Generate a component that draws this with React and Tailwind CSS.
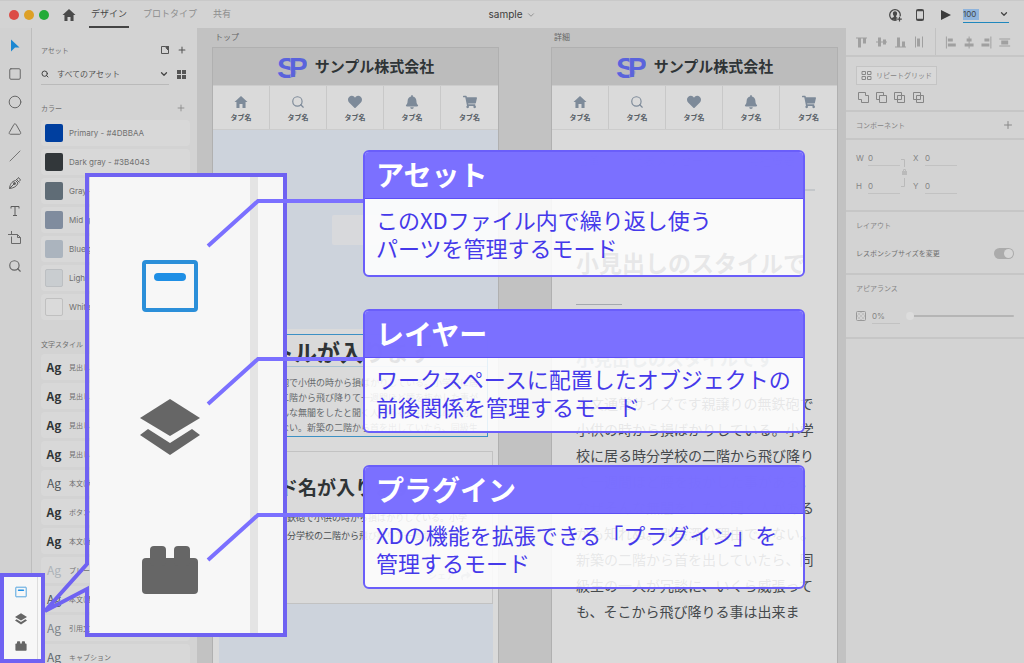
import React, { useState } from "react";
import { IoMdHome } from "react-icons/io";
import { FaHeart, FaBell, FaShare, FaShoppingCart } from "react-icons/fa";
import { LuSearch } from "react-icons/lu";
import {
  ChevronDown,
  Circle,
  Plus,
  Search,
  Slash,
  Square,
  Triangle,
} from "lucide-react";

const colors = [
  { name: "Primary - #4DBBAA", swatch: "bg-[#003f9f]" },
  { name: "Dark gray - #3B4043", swatch: "bg-[#32373a]" },
  { name: "Gray - #6B7A85", swatch: "bg-[#5f6c76]" },
  { name: "Mid gray - #8E9BAE", swatch: "bg-[#808c9e]" },
  { name: "Blue gray - #C3CDD8", swatch: "bg-[#abb4be]" },
  { name: "Light gray - #E9EEF2", swatch: "bg-[#c9cdd0] border border-[#bcbfc2]" },
  { name: "White - #FFFFFF", swatch: "bg-[#dadada] border border-[#c0c0c0]" },
];

const textStyles = [
  { name: "見出し1", style: "font-bold text-[#2f3436]" },
  { name: "見出し2", style: "font-bold text-[#2f3436]" },
  { name: "見出し3", style: "font-bold text-[#2f3436]" },
  { name: "見出し4", style: "font-bold text-[#2f3436]" },
  { name: "本文(大)", style: "text-[#505558]" },
  { name: "ボタン", style: "font-bold text-[#2f3436]" },
  { name: "本文(太字)", style: "font-bold text-[#2f3436]" },
  { name: "プレースホルダー", style: "text-[#adb3b8]" },
  { name: "本文(標準)", style: "text-[#505558]" },
  { name: "引用文", style: "text-[#7f868c]" },
  { name: "キャプション", style: "text-[#62696e]" },
];

const tabs = [
  { icon: IoMdHome, size: "size-4" },
  { icon: LuSearch, size: "size-3.5" },
  { icon: FaHeart, size: "size-3.5" },
  { icon: FaBell, size: "size-3.5" },
  { icon: FaShoppingCart, size: "size-3.5" },
];

const topLines = [
  "親譲りの無鉄砲で小供の時から損ばかりしている。小学校に居",
  "る時分学校の二階から飛び降りて一週間ほど腰を抜かした事が",
  "ある。なぜそんな無闇をしたと聞く人があるかも知れぬ。別段",
  "深い理由でもない。新築の二階から首を出していたら、同級生",
];

const cardLines = [
  "親譲りの無鉄砲で小供の時から損ばかりしている。小学",
  "校に居る時分学校の二階から飛び降りて一週間ほど腰を",
];

const detailLines = [
  "本文通常サイズです親譲りの無鉄砲で",
  "小供の時から損ばかりしている。小学",
  "校に居る時分学校の二階から飛び降り",
  "て一週間ほど腰を抜かした事がある。",
  "なぜそんな無闇をしたと聞く人がある",
  "かも知れぬ。別段深い理由でもない。",
  "新築の二階から首を出していたら、同",
  "級生の一人が冗談に、いくら威張って",
  "も、そこから飛び降りる事は出来ま",
];

const callouts = [
  {
    title: "アセット",
    lines: ["このXDファイル内で繰り返し使う", "パーツを管理するモード"],
    place: "top-[150px] h-[127px]",
  },
  {
    title: "レイヤー",
    lines: ["ワークスペースに配置したオブジェクトの", "前後関係を管理するモード"],
    place: "top-[309px] h-[124px]",
  },
  {
    title: "プラグイン",
    lines: ["XDの機能を拡張できる「プラグイン」を", "管理するモード"],
    place: "top-[465px] h-[124px]",
  },
];

/* ---------- Icons ---------- */

function AssetIcon({ className }) {
  return (
    <svg viewBox="0 0 60 60" className={className} fill="none" stroke="#2b8fd9">
      <rect x="4" y="6" width="52" height="48" rx="2" strokeWidth="4" />
      <path d="M18 21h24" strokeWidth="8" strokeLinecap="round" stroke="#1f8fe5" />
    </svg>
  );
}

function LayerIcon({ className }) {
  return (
    <svg viewBox="0 0 60 60" className={className} fill="#666">
      <path d="M30 1 60 20 30 38 0 20Z" />
      <path d="M8 31 30 45 52 31 60 37 30 57 0 37Z" />
    </svg>
  );
}

function PluginIcon({ className }) {
  return (
    <svg viewBox="0 0 60 60" className={className} fill="#666">
      <rect x="2" y="18" width="56" height="36" rx="4" />
      <rect x="10" y="6" width="16" height="20" rx="4" />
      <rect x="34" y="6" width="16" height="20" rx="4" />
    </svg>
  );
}

function PenIcon() {
  return (
    <svg viewBox="0 0 14 14" className="size-3.5" fill="none" stroke="#5c5c5c">
      <path d="M1.500 12.500C2 8.500 3.500 5.500 7.500 4.500L10 7C9 10.500 5.500 12 1.500 12.500ZM1.500 12.500 6 8M8 3 11.500 6.500M9 3.500 10.500 1.500 12.500 4 11 5.500" />
      <circle cx="6.500" cy="7.500" r="1" fill="#5c5c5c" />
    </svg>
  );
}

function TextIcon() {
  return (
    <svg viewBox="0 0 14 14" className="size-3.5" fill="none" stroke="#5c5c5c">
      <path d="M3 4.500V2.500H11V4.500M7 2.500V11.500M5 11.500H9" />
    </svg>
  );
}

function ArtboardIcon() {
  return (
    <svg viewBox="0 0 14 14" className="size-3.5" fill="none" stroke="#6a6a6a">
      <path d="M3.500 0V3.500M0 3.500H9.500L12.500 6.500V12.500H3.500V5.500M9.500 3.500V6.500H12.500" />
    </svg>
  );
}

const tools = [
  {
    name: "選択",
    icon: (
      <svg viewBox="0 0 14 14" className="size-3.5" fill="#1b87d2">
        <path d="M3 .5 11.500 8.500H7L3 12.500Z" />
      </svg>
    ),
  },
  { name: "長方形", icon: <Square className="size-3.5" strokeWidth={1.7} /> },
  { name: "楕円形", icon: <Circle className="size-3.5" strokeWidth={1.7} /> },
  { name: "多角形", icon: <Triangle className="size-3.5" strokeWidth={1.7} /> },
  { name: "線", icon: <Slash className="size-3" strokeWidth={1.7} /> },
  { name: "ペン", icon: <PenIcon /> },
  { name: "テキスト", icon: <TextIcon /> },
  { name: "アートボード", icon: <ArtboardIcon /> },
  { name: "ズーム", icon: <Search className="size-3.5" strokeWidth={2} /> },
];

/* ---------- Header ---------- */

function Header() {
  const [zoom, setZoom] = useState("100");

  return (
    <header className="flex h-7 shrink-0 items-center bg-[#d3d3d3] border-t border-[#c9c9c9]">
      <div className="flex flex-1 items-center h-full">
        <div className="flex gap-[5px] ml-[9px]">
          <span className="size-2.5 rounded-full bg-[#dc4c46]" />
          <span className="size-2.5 rounded-full bg-[#dda026]" />
          <span className="size-2.5 rounded-full bg-[#23ab38]" />
        </div>
        <button aria-label="ホーム" className="ml-3">
          <IoMdHome className="size-4 text-[#4a4a4a]" />
        </button>
        <nav className="ml-3 flex h-full gap-3 text-[9px] text-[#8d8d8d]">
          <a href="#design" className="flex items-center border-b-2 border-[#444] px-0.5 text-[#444]">
            デザイン
          </a>
          <a href="#prototype" className="flex items-center px-0.5 border-b-2 border-transparent">
            プロトタイプ
          </a>
          <a href="#share" className="flex items-center px-0.5 border-b-2 border-transparent">
            共有
          </a>
        </nav>
      </div>
      <button className="flex items-center gap-[3px] font-['Inter',sans-serif] text-[10px] text-[#3c3c3c]">
        sample
        <ChevronDown className="size-2.5 text-[#888]" />
      </button>
      <div className="flex flex-1 items-center justify-end">
        <button aria-label="共有ユーザー">
          <svg viewBox="0 0 14 14" className="size-3.5" fill="none" stroke="#484848">
            <circle cx="7" cy="7" r="5.300" strokeWidth="1.300" />
            <path
              d="M7 3.200C5.500 3.200 4.800 4.300 4.900 5.700C5 6.900 5.500 7.400 5.900 8L5.800 9L3.300 10.300C5 12.400 8.500 12.500 10 11L10.500 10.200L8.200 9L8.100 8C8.600 7.400 9 6.900 9.100 5.700C9.200 4.300 8.500 3.200 7 3.200Z"
              fill="#484848"
              stroke="none"
            />
            <path d="M11.500 8.500V14M8.700 11.200H14" stroke="#d3d3d3" strokeWidth="3" />
            <path d="M11.500 9V13.500M9.200 11.200H13.800" strokeWidth="1.200" />
          </svg>
        </button>
        <button aria-label="デバイスプレビュー" className="ml-3">
          <svg viewBox="0 0 12 14" className="h-3.5 w-3" fill="none" stroke="#484848">
            <rect x="2.500" y="1.500" width="7" height="11" rx="1" />
            <path d="M2.500 2.500H9.500M2.500 11.500H9.500" strokeWidth="1.500" />
          </svg>
        </button>
        <button aria-label="再生" className="ml-[15px]">
          <svg viewBox="0 0 10 10" className="size-2.5" fill="#3c3c3c">
            <path d="M0 0 10 5 0 10Z" />
          </svg>
        </button>
        <div className="ml-3 mr-[15px] flex h-4 w-[46px] items-center border-b border-[#1f87bd]">
          <input
            aria-label="ズーム率"
            value={zoom}
            onChange={(e) => setZoom(e.target.value)}
            className="h-[11px] w-4 bg-[#8fb4dc] font-['Inter',sans-serif] text-[8px] text-[#444] outline-none"
          />
          <ChevronDown className="ml-auto size-2.5 text-[#444]" strokeWidth={3} />
        </div>
      </div>
    </header>
  );
}

/* ---------- Left side ---------- */

function Toolbar() {
  return (
    <aside className="w-8 shrink-0 border-r border-[#bdbdbd] bg-[#d1d1d1] pt-[11px] pr-px">
      <div className="flex h-[234px] flex-col items-center justify-between text-[#666]">
        {tools.map((tool) => (
          <button key={tool.name} aria-label={tool.name}>
            {tool.icon}
          </button>
        ))}
      </div>
    </aside>
  );
}

function AssetPanel() {
  return (
    <aside className="w-[165px] shrink-0 overflow-hidden bg-[#d3d3d3] pl-[9px] pr-[7px] text-[7px] leading-none text-[#707070]">
      <div className="mt-[15px] flex h-3.5 items-center">
        <h2>アセット</h2>
        <svg viewBox="0 0 10 10" className="ml-auto size-2.5" fill="none" stroke="#555">
          <path d="M5 1.500H1.500V8.500H8.500V5M5.500 1.500H8.500V5" />
          <path d="M5.500 1.500H8.500V5.500L7 4Z" fill="#555" />
        </svg>
        <button aria-label="追加" className="ml-[7px] mr-[3px]">
          <Plus className="size-2.5 text-[#555]" strokeWidth={2.5} />
        </button>
      </div>
      <div className="mt-1.5 flex items-center">
        <div className="flex h-[22px] w-32 items-center border-b border-[#bababa] text-[8px]">
          <Search className="size-2 text-[#444]" strokeWidth={3} />
          <span className="ml-2 text-[#555]">すべてのアセット</span>
          <ChevronDown className="ml-auto size-2.5 text-[#444]" strokeWidth={3} />
        </div>
        <button aria-label="グリッド表示" className="ml-2">
          <svg viewBox="0 0 9 9" className="size-[9px]" fill="#555">
            <path d="M0 0H4V4H0ZM5 0H9V4H5ZM0 5H4V9H0ZM5 5H9V9H5Z" />
          </svg>
        </button>
      </div>
      <div className="mt-4 flex h-3.5 items-center justify-between">
        <h3>カラー</h3>
        <button aria-label="カラーを追加" className="mr-1">
          <Plus className="size-2.5 text-[#888]" />
        </button>
      </div>
      <ul className="mt-[5px] flex flex-col gap-[3px] font-['Inter',sans-serif] text-[8px]">
        {colors.map((c) => (
          <li key={c.name} className="flex h-[26px] items-center rounded-sm bg-[#d8d8d8] px-1">
            <span className={`size-[18px] rounded-xs ${c.swatch}`} />
            <span className="ml-1.5 whitespace-nowrap">{c.name}</span>
          </li>
        ))}
      </ul>
      <h3 className="mt-[21px] h-[13px]">文字スタイル</h3>
      <ul className="flex flex-col gap-[3px]">
        {textStyles.map((t) => (
          <li key={t.name} className="flex h-[26px] shrink-0 items-center rounded-sm bg-[#d8d8d8] px-1">
            <span className={`w-[18px] text-center text-xs ${t.style}`}>Ag</span>
            <span className="ml-1.5 whitespace-nowrap">{t.name}</span>
          </li>
        ))}
      </ul>
    </aside>
  );
}

/* ---------- Artboards ---------- */

function Logo() {
  return (
    <svg viewBox="0 0 30 26" className="h-[26px] w-[30px]" fill="#5a63dc">
      <g fontFamily="Liberation Sans" fontWeight="bold">
        <text x="0" y="24" fontSize="30">S</text>
        <text x="12" y="23" fontSize="28" stroke="#bcbcbc" strokeWidth="1" paintOrder="stroke">P</text>
      </g>
    </svg>
  );
}

function Artboard({ label, children }) {
  return (
    <section className="flex w-[287px] shrink-0 flex-col">
      <h2 className="mt-[3px] mb-[5px] h-[11px] pl-[3px] text-[8px] leading-[11px] text-[#666]">{label}</h2>
      <div className="flex flex-1 flex-col overflow-hidden border-x border-t border-[#b0b0b0] bg-[#dadada]">
        <div className="flex h-[37px] shrink-0 items-center justify-center gap-2 bg-[#bcbcbc]">
          <Logo />
          <span className="text-[15px] font-bold text-[#2f3436]">サンプル株式会社</span>
        </div>
        <nav className="grid h-[45px] shrink-0 grid-cols-5 divide-x divide-[#c8c8c8] border-y border-[#cccccc]">
          {tabs.map(({ icon: Icon, size }, i) => (
            <a key={i} href="#tab" className="flex flex-col items-center pt-2 text-[#7d8a99]">
              <span className="flex h-4 items-center">
                <Icon className={size} />
              </span>
              <span className="mt-0.5 text-[7px] leading-[10px] font-bold text-[#596168]">タブ名</span>
            </a>
          ))}
        </nav>
        {children}
      </div>
    </section>
  );
}

function TopArtboard() {
  return (
    <Artboard label="トップ">
      <div className="flex h-[199px] shrink-0 justify-center bg-[#cdd3dc] pt-[85px]">
        <span className="h-[30px] w-12 rounded-xs bg-[#d8d9dc]" />
      </div>
      <div className="flex flex-1 flex-col pt-[5px] pr-[5px] pl-[6px]">
        <div className="mr-[5px] h-[103px] shrink-0 border border-[#3c90c4] text-[#65696c]">
          <h3 className="h-8 border-b border-[#a9c3d3] pl-[5px] text-[23px] leading-8 font-bold whitespace-nowrap text-[#2f3436]">
            タイトルが入ります
          </h3>
          <div className="mt-2 pl-1.5 text-[9px] leading-[15px] whitespace-nowrap">
            {topLines.map((line) => (
              <p key={line}>{line}</p>
            ))}
          </div>
        </div>
        <article className="mt-3.5 flex h-[153px] shrink-0 flex-col border border-[#c2c2c2] px-[21px] pt-[21px] whitespace-nowrap">
          <h3 className="text-[19px] leading-7 font-bold text-[#2f3436]">カード名が入ります</h3>
          <div className="mt-2 pl-px text-[9px] leading-[18px] text-[#4a4f52]">
            {cardLines.map((line) => (
              <p key={line}>{line}</p>
            ))}
          </div>
          <a href="#share" className="mt-6 flex items-center justify-end gap-1.5 text-[9px] font-bold text-[#9aa3ad]">
            シェア
            <FaShare className="size-2.5" />
          </a>
        </article>
        <div className="flex-1 bg-[#cdd3dc]" />
      </div>
    </Artboard>
  );
}

function DetailArtboard() {
  return (
    <Artboard label="詳細">
      <div className="pl-6 text-[#45494c]">
        <nav className="mr-[22px] flex justify-between pt-[23px] text-xs whitespace-nowrap text-[#6f7a86]">
          <a href="#history" className="h-[38px] border-b-2 border-[#b5bac0]">沿革</a>
          <a href="#message" className="h-[38px]">代表メッセージ</a>
          <a href="#company" className="h-[38px] border-b-2 border-[#c4c7ca] pr-5">会社概要</a>
        </nav>
        <h3 className="mt-[55px] text-[23px] leading-8 font-bold whitespace-nowrap">小見出しのスタイルで</h3>
        <hr className="mt-[26px] w-[46px] border-[#a4a9ae]" />
        <h4 className="mt-[39px] text-lg leading-7 font-bold whitespace-nowrap text-[#7f8890]">
          小見出しのスタイルです
        </h4>
        <div className="mt-[18px] text-sm leading-[26px] whitespace-nowrap">
          {detailLines.map((line) => (
            <p key={line}>{line}</p>
          ))}
        </div>
      </div>
    </Artboard>
  );
}

/* ---------- Right side ---------- */

function Field({ label }) {
  return (
    <label className="flex items-center font-['Inter',sans-serif] text-[8px] text-[#858585]">
      <span className="w-3">{label}</span>
      <input defaultValue="0" className="h-4 w-8 border-b border-[#c2c2c2] outline-none" />
    </label>
  );
}

function AlignIcons() {
  return (
    <div className="flex h-[29px] items-start border-b-2 border-[#c6c6c6]">
      <svg viewBox="0 0 89 26" className="h-[27px] w-[89px]" fill="#a0a0a0">
        <path d="M10 9h11v1H10ZM12 10h3v9h-3ZM17 10h3v5h-3Z" />
        <path d="M30 13h11v1H30ZM32 9h3v9h-3ZM37 11h3v5h-3Z" />
        <path d="M49 18h11v1H49ZM51 9h3v9h-3ZM56 13h3v5h-3Z" />
        <path d="M69 8h1v11h-1ZM76 8h1v11h-1ZM71 10h3v8h-3Z" />
      </svg>
      <svg viewBox="0 0 88 26" className="h-[27px] w-[88px] border-l border-[#c2c2c2]" fill="#a0a0a0">
        <path d="M10 8h1v12h-1ZM12 10h5v3h-5ZM12 15h8v3h-8Z" />
        <path d="M33 8h1v12h-1ZM31 10h5v3h-5ZM29 15h9v3h-9Z" />
        <path d="M55 8h1v12h-1ZM49 10h5v3h-5ZM46 15h8v3h-8Z" />
        <path d="M64 10h11v1H64ZM64 17h11v1H64ZM66 12h7v4h-7Z" />
      </svg>
    </div>
  );
}

function PropertyPanel() {
  return (
    <aside className="w-[178px] shrink-0 bg-[#d3d3d3] text-[7px] leading-none text-[#858585]">
      <AlignIcons />
      <section className="h-[55px] border-b-2 border-[#c6c6c6] px-2.5 pt-[9px]">
        <button className="flex h-[19px] w-[81px] items-center gap-1 border border-[#c4c4c4] bg-[#d8d8d8] px-1 whitespace-nowrap">
          <svg viewBox="0 0 11 11" className="size-[11px]" fill="none" stroke="#888">
            <path d="M1 1.500H4.500V4.500H1ZM6.500 1.500H10V4.500H6.500ZM1 6.500H4.500V9.500H1ZM6.500 6.500H10V9.500H6.500Z" />
          </svg>
          リピートグリッド
        </button>
        <svg viewBox="0 0 70 12" className="mt-[7px] ml-0.5 h-3 w-[70px]" fill="none" stroke="#858585">
          <path d="M.5 .5H7.500V3.500H10.500V10.500H3.500V7.500H.5Z" />
          <path d="M25.500 3.500V.5H18.500V7.500H21.500M21.500 3.500H28.500V10.500H21.500Z" />
          <path d="M36.500 .5H43.500V7.500H36.500ZM39.500 3.500H46.500V10.500H39.500Z" />
          <path d="M55.500 .5H62.500V7.500H55.500ZM58.500 3.500H65.500V10.500H58.500Z" />
        </svg>
      </section>
      <section className="flex h-7 items-center justify-between border-b-2 border-[#c6c6c6] px-2.5">
        <h3>コンポーネント</h3>
        <button aria-label="コンポーネントを追加">
          <Plus className="size-3 text-[#888]" />
        </button>
      </section>
      <section className="flex h-[72px] border-b-2 border-[#c6c6c6] px-2.5 pt-2.5">
        <div className="flex flex-col gap-3">
          <Field label="W" />
          <Field label="H" />
        </div>
        <svg viewBox="0 0 13 44" className="h-11 w-[13px]" fill="none" stroke="#bababa">
          <path d="M1 9.500H4.500V17M4.500 28V36.500H1" />
          <rect x="2.500" y="21.500" width="4" height="3" fill="#bababa" />
          <path d="M3.500 21V19.500H5.500V21" />
        </svg>
        <div className="flex flex-col gap-3">
          <Field label="X" />
          <Field label="Y" />
        </div>
      </section>
      <section className="h-[63px] border-b-2 border-[#c6c6c6] px-2.5 pt-2.5">
        <h3>レイアウト</h3>
        <label className="mt-[19px] flex items-center justify-between text-[#707070]">
          レスポンシブサイズを変更
          <input
            type="checkbox"
            defaultChecked
            className="relative h-[11px] w-5 appearance-none rounded-full bg-[#ababab] before:absolute before:top-px before:right-px before:size-[9px] before:rounded-full before:bg-[#d6d6d6]"
          />
        </label>
      </section>
      <section className="h-[64px] border-b-2 border-[#c6c6c6] px-2.5 pt-2.5">
        <h3>アピアランス</h3>
        <div className="mt-4 flex items-center">
          <svg viewBox="0 0 10 10" className="size-2.5" fill="none" stroke="#999">
            <path d="M2 2 8 8M8 2 2 8M5 1 1 5M9 5 5 9M5 1 9 5M1 5 5 9" stroke="#c2c2c2" />
            <rect x=".5" y=".5" width="9" height="9" rx="1" />
          </svg>
          <input
            aria-label="不透明度"
            defaultValue="0%"
            className="ml-1.5 h-4 w-7 border-b border-[#c2c2c2] font-['Inter',sans-serif] text-[8px] outline-none"
          />
          <input
            type="range"
            aria-label="不透明度スライダー"
            defaultValue="0"
            className="ml-1.5 h-2 w-[108px] appearance-none [&::-webkit-slider-runnable-track]:h-0.5 [&::-webkit-slider-runnable-track]:rounded-full [&::-webkit-slider-runnable-track]:bg-[#b5b5b5] [&::-webkit-slider-thumb]:-mt-[3px] [&::-webkit-slider-thumb]:size-2 [&::-webkit-slider-thumb]:appearance-none [&::-webkit-slider-thumb]:rounded-full [&::-webkit-slider-thumb]:bg-[#dcdcdc]"
          />
        </div>
      </section>
    </aside>
  );
}

/* ---------- Annotations on top of the app ---------- */

function ModeBox() {
  return (
    <div className="absolute top-[573px] left-0 flex h-[90px] w-[45px] border-4 border-[#6f62f2] bg-[#f7f7f7]">
      <div className="flex w-[34px] flex-col items-center gap-[15px] border-r border-[#dddddd] pt-[9px]">
        <AssetIcon className="size-3" />
        <LayerIcon className="size-3" />
        <PluginIcon className="size-3" />
      </div>
    </div>
  );
}

function ModeZoom() {
  return (
    <div className="absolute top-[175px] left-[90px] flex h-[460px] w-[195px] bg-[#f7f7f7]">
      <div className="flex w-[168px] flex-col items-center gap-[82px] border-r-8 border-[#e4e4e4] pt-[81px]">
        <AssetIcon className="size-[60px]" />
        <LayerIcon className="size-[60px]" />
        <PluginIcon className="size-[60px]" />
      </div>
    </div>
  );
}

function Leaders() {
  return (
    <svg
      viewBox="0 0 400 663"
      className="pointer-events-none absolute top-0 left-0 h-[663px] w-[400px]"
      fill="none"
      strokeWidth="4"
    >
      <path d="M87 564V175H285V635H87V589L45 611Z" stroke="#6f62f2" />
      <g stroke="#7b70ff">
        <path d="M208 246 258 201H363" />
        <path d="M208 404 258 359H363" />
        <path d="M208 560 258 515H363" />
      </g>
    </svg>
  );
}

function Callout({ title, lines, place }) {
  return (
    <section
      className={`absolute left-[363px] w-[442px] overflow-hidden rounded-md border-2 border-[#6a5efa] bg-white/87 ${place}`}
    >
      <h2 className="h-[47px] border-b border-[#5d50f5] bg-[#7367ff]/94 pl-[11px] text-[28px] leading-[45px] font-bold text-white">
        {title}
      </h2>
      <div className="pt-1.5 pl-[11px] text-[22px] leading-7 whitespace-nowrap text-[#4539ea]">
        {lines.map((line) => (
          <p key={line}>{line}</p>
        ))}
      </div>
    </section>
  );
}

export default function App() {
  return (
    <div className="relative flex h-screen flex-col overflow-hidden bg-[#c2c2c2] font-['Noto_Sans_CJK_JP',sans-serif]">
      <Header />
      <div className="flex min-h-0 flex-1">
        <Toolbar />
        <AssetPanel />
        <main className="flex min-w-0 flex-1 gap-[52px] overflow-hidden pl-[15px]">
          <TopArtboard />
          <DetailArtboard />
        </main>
        <PropertyPanel />
      </div>

      <ModeZoom />
      <ModeBox />
      <Leaders />
      {callouts.map((c) => (
        <Callout key={c.title} {...c} />
      ))}
    </div>
  );
}
